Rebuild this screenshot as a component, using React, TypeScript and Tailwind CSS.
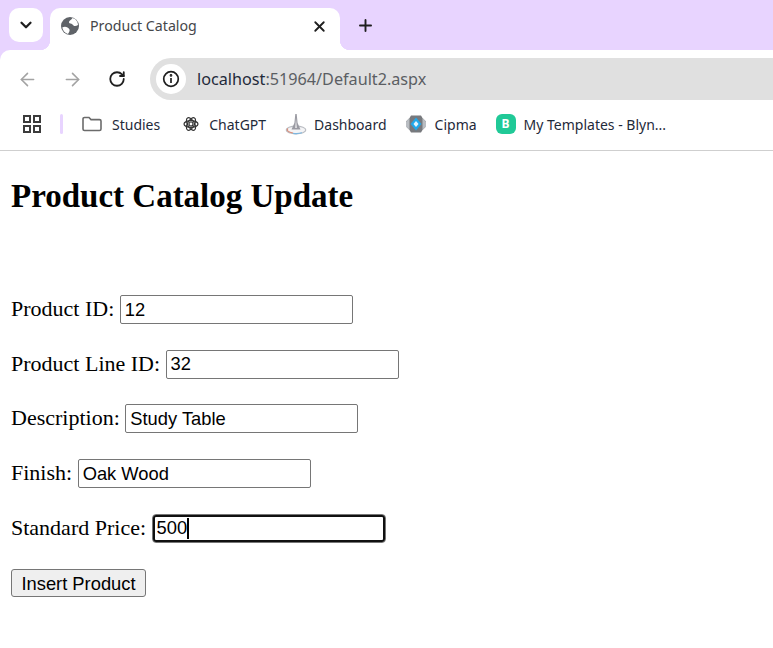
import { ArrowLeft, ArrowRight, ChevronDown, Plus, RotateCw, X } from "lucide-react";

const ui = "font-['Noto_Sans','Open_Sans',sans-serif]";

function Globe() {
  return (
    <svg width="18" height="18" viewBox="0 0 18 18" className="shrink-0">
      <circle cx="9" cy="9" r="9" fill="#5f6368" />
      <path d="M11.5 1 C10.5 2.5 9.5 3 8.5 4 C7.5 5 8 6.5 9.5 6.5 C11 6.5 11.5 7.5 12.5 8.5 C13.5 9.5 15.5 9 17 8 C17 5 15 2 11.5 1 Z" fill="#fff" />
      <path d="M1.2 10.5 C3 9.5 5 9.5 6.5 10.5 C8 11.5 9 12.5 8.5 14 C8 15.5 7.5 16 7 17 C4 16 2 14 1.2 10.5 Z" fill="#fff" />
    </svg>
  );
}

function Apps() {
  return (
    <svg width="18" height="18" viewBox="0 0 18 18" fill="none" stroke="#3c3c3c" strokeWidth="2">
      <rect x="1" y="1" width="6" height="6" />
      <rect x="11" y="1" width="6" height="6" />
      <rect x="1" y="11" width="6" height="6" />
      <rect x="11" y="11" width="6" height="6" />
    </svg>
  );
}

function Folder() {
  return (
    <svg width="20" height="16" viewBox="0 0 20 16" fill="none" stroke="#6b6b6b" strokeWidth="1.6">
      <path d="M1 3 a1.5 1.5 0 0 1 1.5-1.5 H7 L9 3.6 H17.5 A1.5 1.5 0 0 1 19 5.1 V13 a1.5 1.5 0 0 1-1.5 1.5 H2.5 A1.5 1.5 0 0 1 1 13 Z" />
    </svg>
  );
}

function ChatGptIcon() {
  return (
    <svg width="16" height="16" viewBox="0 0 16 16" fill="none" stroke="#333" strokeWidth="1.2">
      <ellipse cx="8" cy="8" rx="7" ry="3.4" />
      <ellipse cx="8" cy="8" rx="7" ry="3.4" transform="rotate(60 8 8)" />
      <ellipse cx="8" cy="8" rx="7" ry="3.4" transform="rotate(120 8 8)" />
      <circle cx="8" cy="8" r="2" />
    </svg>
  );
}

function DashboardIcon() {
  return (
    <svg width="22" height="22" viewBox="0 0 22 22">
      <ellipse cx="11" cy="17" rx="9.8" ry="3.8" fill="#f4f4f6" stroke="#b9bcc2" strokeWidth="1.2" />
      <path d="M3 15.5 A9 3.4 0 0 0 8 20" fill="none" stroke="#d98f7c" strokeWidth="1.2" />
      <path d="M8 20.3 A9 3.4 0 0 0 17 19.8" fill="none" stroke="#7cb7e0" strokeWidth="1.2" />
      <path d="M10.3 1 L11.7 1 L12.6 10 L15.5 16.5 L6.5 16.5 L9.4 10 Z" fill="#9a9aa2" />
      <path d="M11 5 L12 15 L10 15 Z" fill="#dcdce0" />
    </svg>
  );
}

function CipmaIcon() {
  return (
    <svg width="20" height="20" viewBox="0 0 20 20">
      <path d="M5 1.5 H15 L16.5 4 L20 7.5 V12.5 L16.5 16 L15 18.5 H5 L3.5 16 L0 12.5 V7.5 L3.5 4 Z" fill="#77797d" />
      <path d="M0 7.5 L3.5 4 V16 L0 12.5 Z" fill="#b9bdc2" />
      <path d="M20 7.5 L16.5 4 V16 L20 12.5 Z" fill="#b9bdc2" />
      <path d="M10 3.5 L4.5 10 L10 16.5 L15.5 10 Z" fill="#21a8ea" />
      <path d="M10 7 L7.5 10 L10 13 L12.5 10 Z" fill="#e6f6fe" />
    </svg>
  );
}

function Bookmark({ icon, label, className }: { icon: React.ReactNode; label: string; className?: string }) {
  return (
    <div className={`flex items-center ${className ?? ""}`}>
      {icon}
      <span className="text-[14px] text-[#1f2a3a] whitespace-nowrap">{label}</span>
    </div>
  );
}

function Field({ label, value, focused }: { label: string; value: string; focused?: boolean }) {
  return (
    <p className="my-[25.7px] text-[22px] leading-[normal]">
      {label}{" "}
      <span className="relative inline-block">
        <input
          readOnly
          defaultValue={value}
          className={`h-[29px] px-[4px] text-[18.33px] font-['Liberation_Sans',sans-serif] text-black bg-white border border-[#767676] rounded-[2px] ${
            focused ? "w-[234px] outline-2 outline-[#101010] outline-offset-[-3px] rounded-[4px]" : "w-[233px] outline-none"
          }`}
        />
        {focused && <span className="absolute left-[35px] top-[4px] w-[2px] h-[21px] bg-black" />}
      </span>
    </p>
  );
}

export default function App() {
  return (
    <div className="w-[773px] h-[648px] overflow-hidden bg-white">
      <div className={`h-[50px] bg-[#e8d4ff] flex items-end pl-[9px] ${ui}`}>
        <div className="w-[34px] h-[34px] mb-[8px] rounded-[10px] bg-white flex items-center justify-center">
          <ChevronDown size={18} strokeWidth={3} color="#1f1f1f" />
        </div>
        <div className="relative ml-[7px] w-[290px] h-[42px] bg-white rounded-t-[10px] flex items-center pl-[11px] pr-[12px] pb-[6px]">
          <span className="absolute left-[-10px] bottom-0 w-[10px] h-[10px] bg-[radial-gradient(circle_at_0_0,#e8d4ff_10px,#fff_10.5px)]" />
          <span className="absolute right-[-10px] bottom-0 w-[10px] h-[10px] bg-[radial-gradient(circle_at_100%_0,#e8d4ff_10px,#fff_10.5px)]" />
          <Globe />
          <span className="ml-[11px] text-[14.2px] text-[#45474a] flex-1">Product Catalog</span>
          <X size={17} strokeWidth={2.6} color="#1f1f1f" />
        </div>
        <Plus size={19} strokeWidth={2.4} color="#1f1f1f" className="ml-[16px] mb-[15px]" />
      </div>

      <div className="bg-[#e8d4ff]">
        <div className={`h-[58px] bg-white rounded-tl-[10px] flex items-start pt-[8px] pl-[17px] ${ui}`}>
          <div className="flex items-center h-[42px] gap-[24px]">
            <ArrowLeft size={21} strokeWidth={1.8} color="#a3a3a3" />
            <ArrowRight size={21} strokeWidth={1.8} color="#a3a3a3" />
            <RotateCw size={18} strokeWidth={2.4} color="#1f1f1f" className="ml-[1px]" />
          </div>
          <div className="ml-[24px] flex-1 h-[42px] bg-[#e0e0e0] rounded-l-[21px] flex items-center pl-[6px]">
            <div className="w-[30px] h-[30px] rounded-full bg-white flex items-center justify-center">
              <svg width="18" height="18" viewBox="0 0 18 18" fill="none" stroke="#1f1f1f" strokeWidth="1.7">
                <circle cx="9" cy="9" r="7.3" />
                <path d="M9 8 V13" />
                <circle cx="9" cy="5.4" r="0.5" fill="#1f1f1f" />
              </svg>
            </div>
            <span className="ml-[11px] text-[16.2px] text-[#5b5e63]">
              <span className="text-[#1f2a3a]">localhost</span>:51964/Default2.aspx
            </span>
          </div>
        </div>
      </div>

      <div className={`h-[43px] border-b border-[#cfcfcf] flex items-center pl-[23px] pb-[10px] ${ui}`}>
        <Apps />
        <div className="ml-[19px] w-[3px] h-[20px] rounded bg-[#e8d4ff]" />
        <Bookmark className="ml-[19px] gap-[10px]" icon={<Folder />} label="Studies" />
        <Bookmark className="ml-[23px] gap-[10px]" icon={<ChatGptIcon />} label="ChatGPT" />
        <Bookmark className="ml-[19px] gap-[7px]" icon={<DashboardIcon />} label="Dashboard" />
        <Bookmark className="ml-[19px] gap-[9px]" icon={<CipmaIcon />} label="Cipma" />
        <Bookmark
          className="ml-[19px] gap-[8px]"
          icon={
            <span className="w-[20px] h-[20px] rounded-[6px] bg-[#20c997] text-white text-[12px] font-bold flex items-center justify-center">
              B
            </span>
          }
          label="My Templates - Blyn..."
        />
      </div>

      <div className="px-[11px] text-black font-['Liberation_Serif',serif]">
        <h1 className="text-[33px] font-bold leading-[normal] mt-[27px] mb-[80px]">Product Catalog Update</h1>
        <Field label="Product ID:" value="12" />
        <Field label="Product Line ID:" value="32" />
        <Field label="Description:" value="Study Table" />
        <Field label="Finish:" value="Oak Wood" />
        <Field label="Standard Price:" value="500" focused />
        <button className="mt-px w-[135px] h-[28px] bg-[#efefef] border border-[#767676] rounded-[3px] text-[18.33px] font-['Liberation_Sans',sans-serif] text-black">
          Insert Product
        </button>
      </div>
    </div>
  );
}
